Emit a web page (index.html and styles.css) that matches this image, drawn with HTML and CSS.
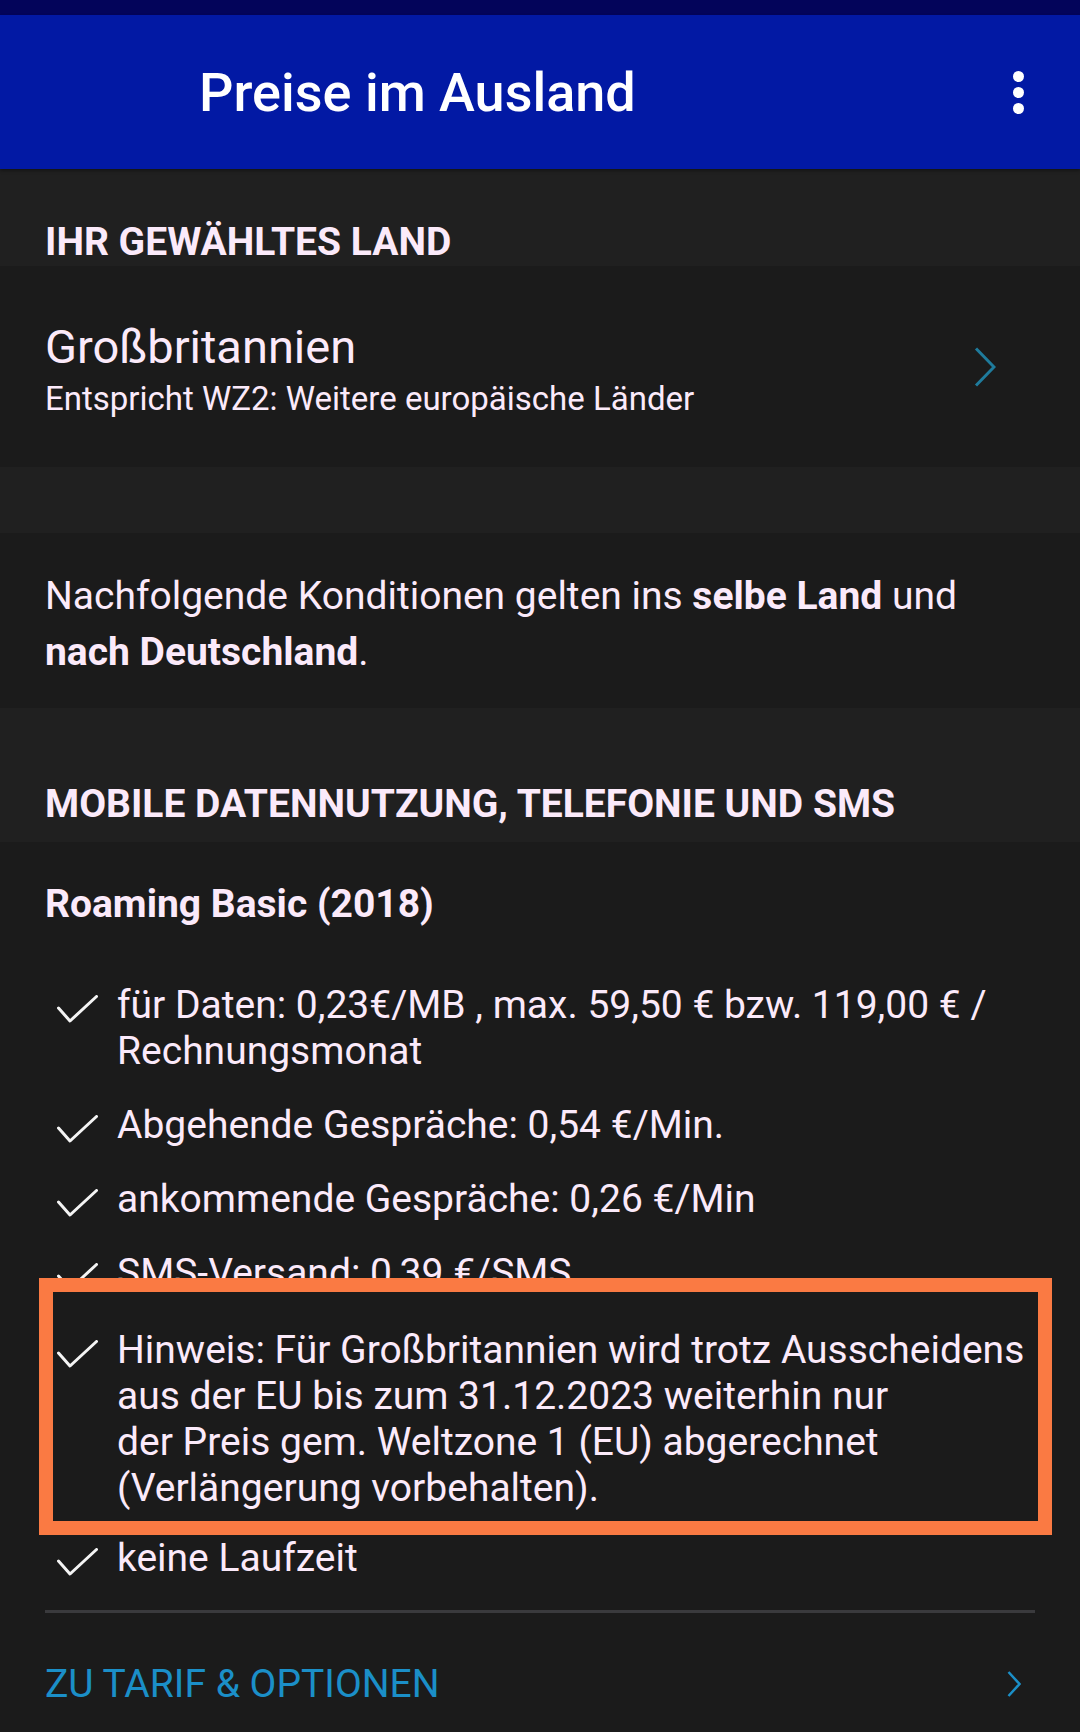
FILE: index.html
```
<!DOCTYPE html>
<html lang="de">
<head>
  <meta charset="UTF-8" />
  <meta name="viewport" content="width=device-width, initial-scale=1.0" />
  <title>Preise im Ausland</title>
  <link rel="stylesheet" href="styles.css">
</head>
<body>
  <div class="statusbar"></div>

  <header class="appbar">
    <h1 class="appbar-title">Preise im Ausland</h1>
    <span class="kebab"><i></i><i></i><i></i></span>
  </header>

  <main>
    <h2 class="section-head">IHR GEWÄHLTES LAND</h2>

    <a class="country" href="#">
      <div class="country-text">
        <div class="country-name">Großbritannien</div>
        <div class="country-zone">Entspricht WZ2: Weitere europäische Länder</div>
      </div>
      <svg class="chevron" width="22" height="40" viewBox="0 0 22 40"><polyline points="2,1.5 20,20 2,38.5" /></svg>
    </a>

    <div class="spacer"></div>

    <p class="intro">Nachfolgende Konditionen gelten ins <strong>selbe Land</strong> und <strong>nach Deutschland</strong>.</p>

    <h2 class="section-head section-head-tall">MOBILE DATENNUTZUNG, TELEFONIE UND SMS</h2>

    <section class="tariff">
      <h3 class="tariff-name">Roaming Basic (2018)</h3>
      <ul class="features">
        <li>
          <svg class="check" width="41" height="28" viewBox="0 0 41 28"><polyline points="1.5,13 13,26 39.5,1.5" /></svg>
          <span>für Daten: 0,23€/MB , max. 59,50 € bzw. 119,00 € / Rechnungsmonat</span>
        </li>
        <li>
          <svg class="check" width="41" height="28" viewBox="0 0 41 28"><polyline points="1.5,13 13,26 39.5,1.5" /></svg>
          <span>Abgehende Gespräche: 0,54 €/Min.</span>
        </li>
        <li>
          <svg class="check" width="41" height="28" viewBox="0 0 41 28"><polyline points="1.5,13 13,26 39.5,1.5" /></svg>
          <span>ankommende Gespräche: 0,26 €/Min</span>
        </li>
        <li>
          <svg class="check" width="41" height="28" viewBox="0 0 41 28"><polyline points="1.5,13 13,26 39.5,1.5" /></svg>
          <span>SMS-Versand: 0,39 €/SMS</span>
        </li>
        <li class="highlight">
          <svg class="check" width="41" height="28" viewBox="0 0 41 28"><polyline points="1.5,13 13,26 39.5,1.5" /></svg>
          <span>Hinweis: Für Großbritannien wird trotz Ausscheidens<br>aus der EU bis zum 31.12.2023 weiterhin nur<br>der Preis gem. Weltzone 1 (EU) abgerechnet<br>(Verlängerung vorbehalten).</span>
        </li>
        <li>
          <svg class="check" width="41" height="28" viewBox="0 0 41 28"><polyline points="1.5,13 13,26 39.5,1.5" /></svg>
          <span>keine Laufzeit</span>
        </li>
      </ul>

      <hr class="divider">

      <a class="link-row" href="#">
        <span>ZU TARIF &amp; OPTIONEN</span>
        <svg class="link-chevron" width="14" height="26" viewBox="0 0 14 26"><polyline points="1.5,1 12.5,13 1.5,25" /></svg>
      </a>
    </section>
  </main>
</body>
</html>
```
FILE: styles.css
```
:root {
  --status: #03045a;
  --primary: #0219a4;
  --bg: #1b1b1b;
  --band: #202020;
  --text: #fbeafa;
  --link: #1b8fc8;
  --accent: #fa7a43;
}
* { box-sizing: border-box; }
html, body {
  margin: 0;
  padding: 0;
  height: 100%;
  overflow: hidden;
  background: var(--bg);
  color: var(--text);
  font-family: Roboto, 'Noto Sans', 'Liberation Sans', sans-serif;
}
a { color: inherit; text-decoration: none; }

.statusbar {
  height: 15px;
  background: var(--status);
}
.appbar {
  height: 154px;
  background: var(--primary);
  display: flex;
  align-items: center;
  justify-content: space-between;
  padding: 0 56px 0 199px;
  box-shadow: 0 2px 3px rgba(0, 0, 0, .35);
  position: relative;
}
.appbar-title {
  margin: 0;
  font-size: 54px;
  font-weight: 500;
  color: #fff;
}
.kebab {
  display: flex;
  flex-direction: column;
  gap: 5px;
}
.kebab i {
  width: 11px;
  height: 11px;
  border-radius: 50%;
  background: #fff;
}

.section-head {
  margin: 0;
  padding: 50px 45px 1px;
  background: var(--band);
  font-size: 39px;
  font-weight: 700;
  line-height: 46px;
}
.section-head-tall { padding: 73px 45px 15px; }

.country {
  display: flex;
  align-items: center;
  justify-content: space-between;
  padding: 53px 84px 44px 45px;
}
.country-name {
  font-size: 47px;
  line-height: 56px;
}
.country-zone {
  font-size: 33px;
  line-height: 48px;
}
.chevron {
  margin-bottom: 8px;
}
.chevron polyline {
  fill: none;
  stroke: #1f7b9c;
  stroke-width: 3;
}

.spacer {
  height: 66px;
  background: var(--band);
}

.intro {
  margin: 0;
  padding: 35px 80px 28px 45px;
  font-size: 39px;
  line-height: 56px;
}
.intro strong { font-weight: 700; }

.tariff { padding: 39px 0 0; }
.tariff-name {
  margin: 0;
  padding: 0 45px;
  font-size: 39px;
  font-weight: 700;
  line-height: 46px;
}

.features {
  list-style: none;
  margin: 55px 0 0;
  padding: 0;
}
.features li {
  display: flex;
  gap: 19px;
  padding: 0 45px 0 57px;
  font-size: 39px;
  line-height: 46px;
}
.features li + li { margin-top: 28px; }
.check {
  flex-shrink: 0;
  margin-top: 13px;
}
.check polyline {
  fill: none;
  stroke: #f4f4f4;
  stroke-width: 3;
  stroke-linecap: round;
  stroke-linejoin: round;
}

/* marker box laid over the list */
.features li.highlight {
  position: relative;
  margin: -18px 28px 0 39px;
  padding: 35px 0 10px 4px;
  border: 14px solid var(--accent);
  background: var(--bg);
}
.features li.highlight + li { margin-top: 0; }

.divider {
  margin: 29px 45px 0;
  height: 3px;
  border: 0;
  background: #3a3a3d;
}

.link-row {
  display: flex;
  align-items: center;
  justify-content: space-between;
  padding: 48px 59px 0 45px;
  font-size: 39px;
  line-height: 46px;
  color: var(--link);
}
.link-chevron polyline {
  fill: none;
  stroke: var(--link);
  stroke-width: 2.5;
}
```
